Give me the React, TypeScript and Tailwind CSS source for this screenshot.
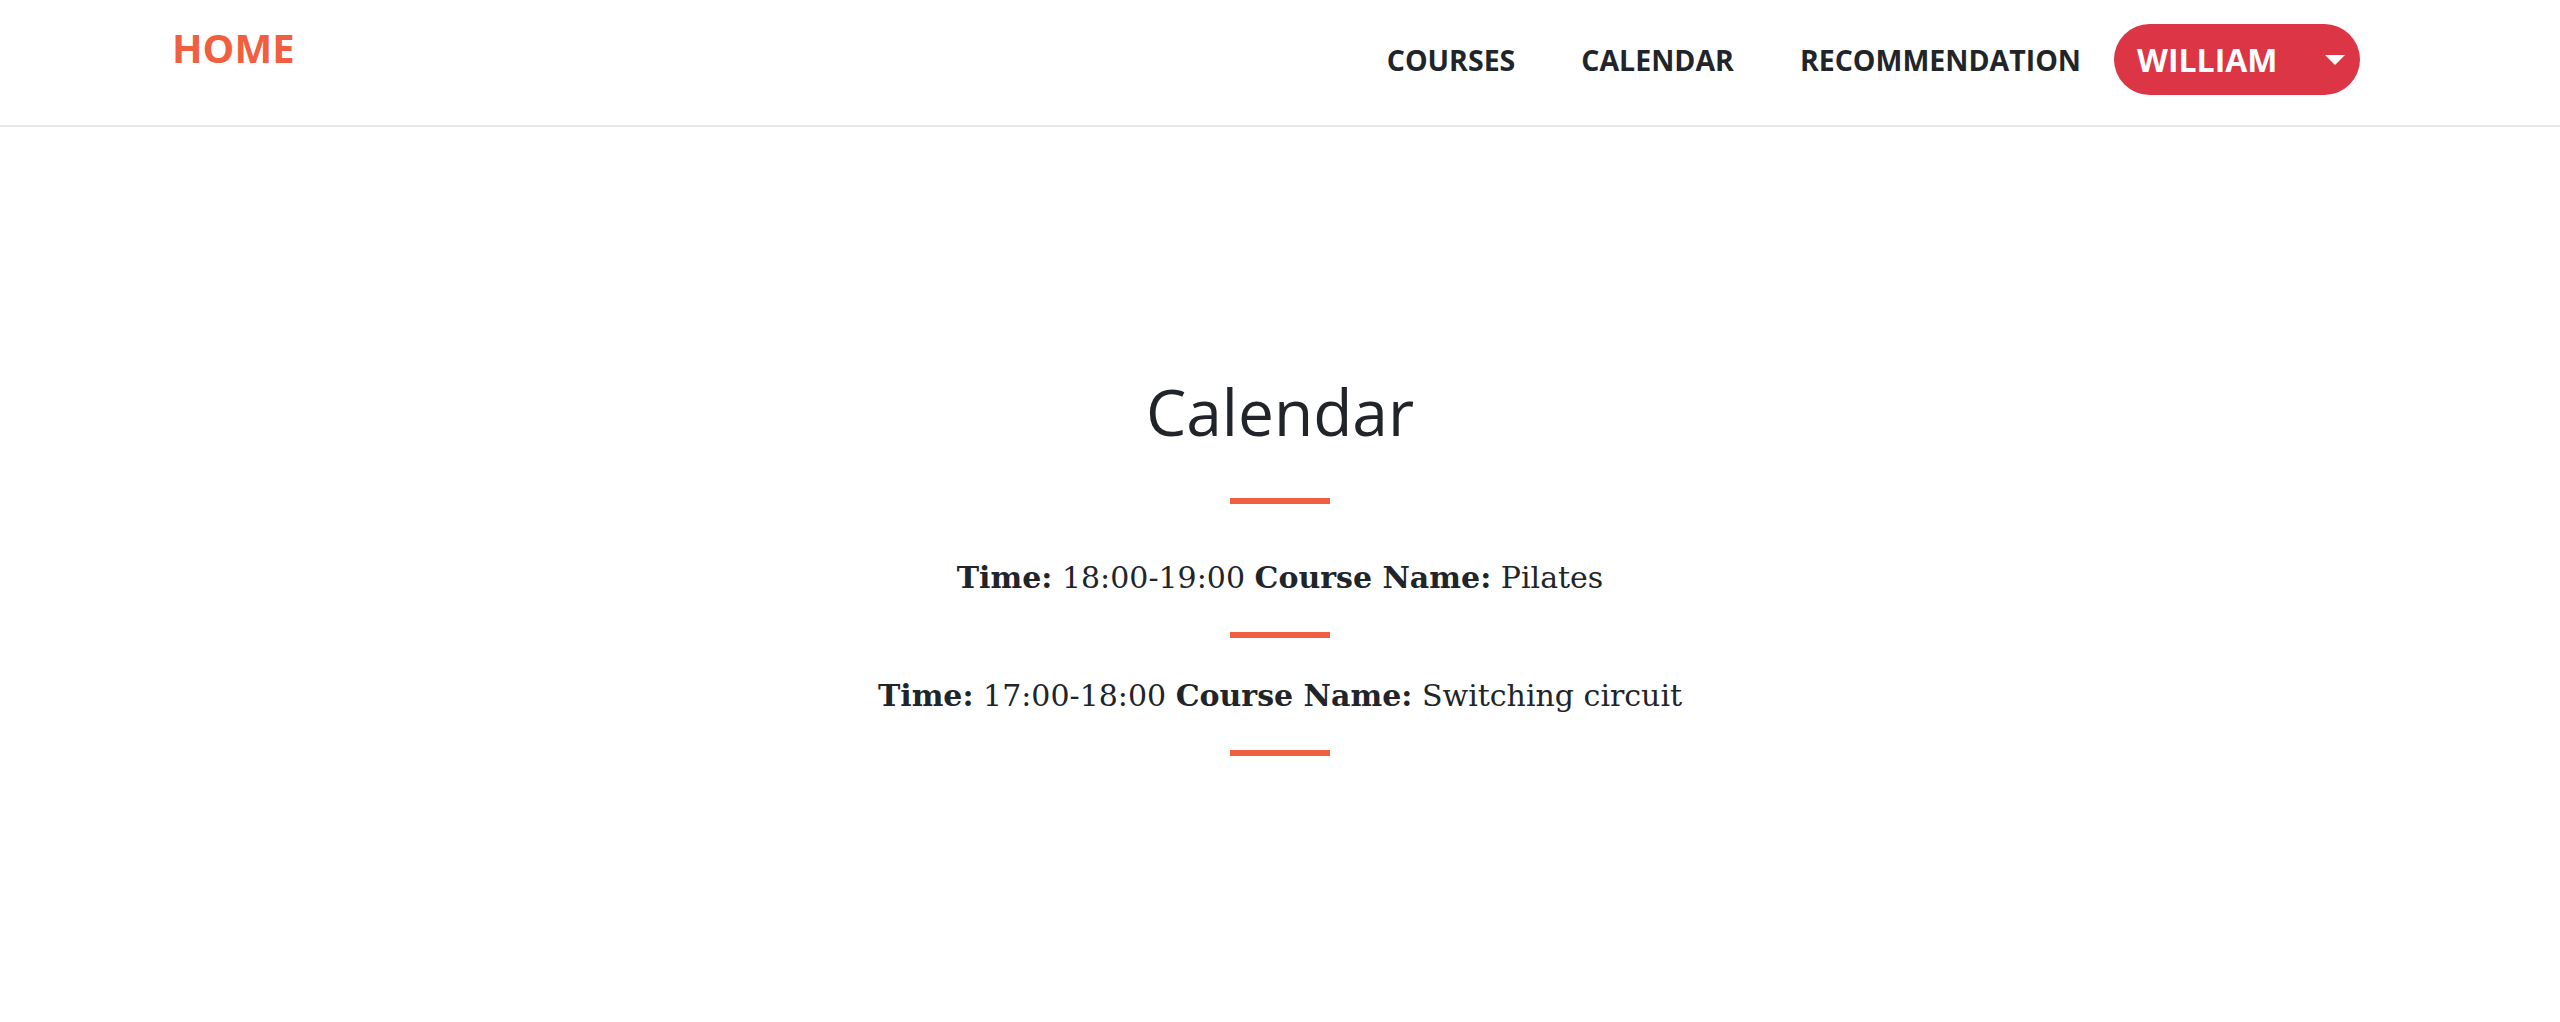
import React from 'react'

const entries = [
  { time: '18:00-19:00', name: 'Pilates' },
  { time: '17:00-18:00', name: 'Switching circuit' },
]

const Divider = () => <div className="w-[100px] h-[6px] bg-[#f05f40]" />

export default function App() {
  return (
    <div className="min-h-screen bg-white text-[#212529]" style={{ fontFamily: '"Open Sans", sans-serif' }}>
      {/* Navbar */}
      <header className="h-[127px] border-b-2 border-[#e8e8e8] pl-[172px] pr-[200px] flex items-start justify-between">
        <a className="pt-[20px] text-[40px] leading-[55px] font-bold text-[#f05f40]">HOME</a>
        <nav className="flex items-center pt-[24px]">
          {['COURSES', 'CALENDAR', 'RECOMMENDATION'].map((item) => (
            <a key={item} className="px-[33px] text-[28.5px] font-bold leading-[40px]">
              {item}
            </a>
          ))}
          <button className="h-[71px] w-[246px] rounded-full bg-[#dc3545] text-white flex items-center pl-[23px] pr-[15px]">
            <span className="text-[32px] font-bold leading-none">WILLIAM</span>
            <svg className="ml-auto" width="20" height="10" viewBox="0 0 20 10">
              <path d="M0 0 L20 0 L10 10 Z" fill="white" />
            </svg>
          </button>
        </nav>
      </header>

      {/* Calendar */}
      <main className="flex flex-col items-center pt-[247px]">
        <h2 className="text-[64px] leading-[76px] font-normal">Calendar</h2>
        <div className="mt-[48px] mb-[16px]">
          <Divider />
        </div>
        {entries.map((e) => (
          <div key={e.time} className="flex flex-col items-center">
            <p className="mt-[38px] text-[30px] leading-[40px]" style={{ fontFamily: '"DejaVu Serif", serif' }}>
              <b>Time:</b> {e.time} <b>Course Name:</b> {e.name}
            </p>
            <div className="mt-[34px]">
              <Divider />
            </div>
          </div>
        ))}
      </main>
    </div>
  )
}
